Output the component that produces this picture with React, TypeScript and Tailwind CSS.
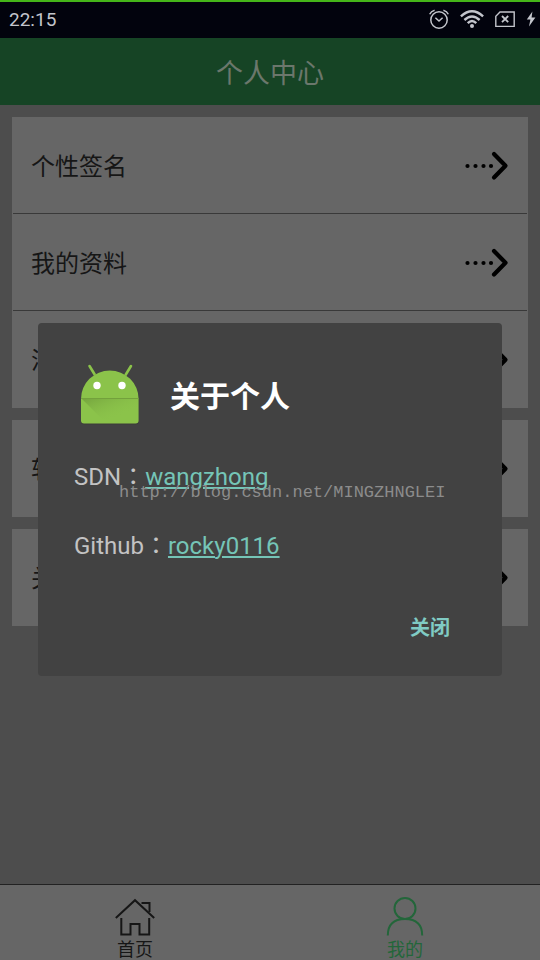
import React from "react";

const FONT = "font-[Roboto,'Noto_Sans_CJK_SC',sans-serif]";

function DottedArrow() {
  return (
    <svg className="h-8 w-11" viewBox="0 0 44 32" aria-hidden="true">
      <g fill="#000">
        <circle cx="2.5" cy="16" r="2.1" />
        <circle cx="10.5" cy="16" r="2.1" />
        <circle cx="18.5" cy="16" r="2.1" />
        <circle cx="26" cy="16" r="2.1" />
      </g>
      <path d="M29 4 L40.5 15.8 L29 27.5" fill="none" stroke="#000" strokeWidth="4.2" strokeLinecap="round" strokeLinejoin="round" />
    </svg>
  );
}

function StatusBar() {
  return (
    <header className="flex h-[38px] items-center justify-between border-t-2 border-[#45b619] bg-[#02030d] pb-[2px] pl-[9px] text-[#c3c5cc]">
      <time className="pt-[2px] text-[19px]">22:15</time>
      <div className="flex items-center gap-[11px]">
        <svg className="h-5 w-5" viewBox="0 0 20 20" fill="none" stroke="currentColor" strokeWidth="1.5" aria-label="Alarm">
          <circle cx="10" cy="11" r="8.2" />
          <path d="M6.4 8.8 L10 12 L13.6 8.8" />
          <path d="M0.7 5.2 Q2 2.2 5.6 1.2 M19.3 5.2 Q18 2.2 14.4 1.2" />
        </svg>
        <svg className="h-5 w-6" viewBox="0 0 24 20" fill="none" stroke="currentColor" strokeWidth="2.4" aria-label="Wi-Fi">
          <path d="M0.9 7.4 Q12 -2.8 23.1 7.4" />
          <path d="M4.4 11 Q12 4 19.6 11" />
          <path d="M7.7 14.2 Q12 10 16.3 14.2" />
          <circle cx="12" cy="17" r="2" fill="currentColor" stroke="none" />
        </svg>
        <svg className="h-5 w-5" viewBox="0 0 20 20" fill="none" stroke="currentColor" strokeWidth="1.4" aria-label="No SIM">
          <path d="M5 3 H19.2 V17.4 H0.8 V7.2 Z" />
          <path d="M7 7 L13.2 13.2 M13.2 7 L7 13.2" strokeWidth="1.8" />
        </svg>
        <svg className="mr-1 h-5 w-[10px]" viewBox="0 0 10 20" fill="currentColor" aria-label="Charging">
          <path d="M6.4 2.5 L0.8 10.6 H4.4 L3 17.5 L9.4 8.6 H5.6 Z" />
        </svg>
      </div>
    </header>
  );
}

function MenuRow({ label }: { label: string }) {
  return (
    <li className="h-[97px]">
      <button type="button" className="flex h-full w-full items-center justify-between px-[18px] pt-px text-2xl text-[#161616]">
        <span className="pt-[2px]">{label}</span>
        <DottedArrow />
      </button>
    </li>
  );
}

function MenuCard({ labels }: { labels: string[] }) {
  return (
    <ul className="divide-y divide-[#393939] bg-[#666666] px-px">
      {labels.map((label) => (
        <MenuRow key={label} label={label} />
      ))}
    </ul>
  );
}

function AndroidLogo() {
  return (
    <svg className="h-16 w-[60px]" viewBox="0 0 60 64" aria-hidden="true">
      <path d="M9.5 3 L15 12 M51 3 L45.5 12" stroke="#8bc34a" strokeWidth="2.6" strokeLinecap="round" />
      <path d="M1 37 A28.8 29.5 0 0 1 58.6 37 V58.5 Q58.6 61.5 55.6 61.5 H4 Q1 61.5 1 58.5 Z" fill="#35383080" />
      <path d="M1 36 A28.8 28.5 0 0 1 58.6 36 V57.5 Q58.6 60.5 55.6 60.5 H4 Q1 60.5 1 57.5 Z" fill="#8bc34a" />
      <defs>
        <linearGradient id="logo-shadow" x1="0" y1="0" x2="1" y2="1">
          <stop offset="0" stopColor="#6f9c3b" stopOpacity="0.8" />
          <stop offset="0.7" stopColor="#8bc34a" stopOpacity="0" />
        </linearGradient>
      </defs>
      <path d="M2 36 H58 V60 H26 Z" fill="url(#logo-shadow)" />
      <path d="M1 35.5 H58.6" stroke="#73a13c" strokeWidth="1.2" />
      <circle cx="17" cy="22.5" r="3.7" fill="#fff" />
      <circle cx="42" cy="22.5" r="3.7" fill="#fff" />
    </svg>
  );
}

function ContactLine({ site, account }: { site: string; account: string }) {
  return (
    <p className="h-10">
      {site}
      <span className="font-['Noto_Sans_CJK_TC',sans-serif] leading-none">：</span>
      <a href={"#" + account} className="text-[#75c5b7] underline decoration-2 underline-offset-2">
        {account}
      </a>
    </p>
  );
}

function AboutDialog() {
  return (
    <div className="absolute inset-0 flex items-center px-[38px] pt-[38px]">
      <section role="dialog" aria-modal="true" aria-labelledby="about-title" className="w-full rounded bg-[#424242] px-9 pt-10 pb-7">
        <div className="flex items-center gap-[30px] pl-[6px]">
          <AndroidLogo />
          <h2 id="about-title" className="pt-1 text-3xl font-bold text-white">关于个人</h2>
        </div>
        <div className="mt-[30px] flex flex-col gap-[29px] text-2xl leading-10 text-[#c3c3c3]">
          <div className="relative">
            <ContactLine site="SDN" account="wangzhong" />
            <span className="pointer-events-none absolute top-[26px] left-[45px] font-['Liberation_Mono',monospace] text-[17px] leading-5 whitespace-nowrap text-[#8c8c8c]">
              http://blog.csdn.net/MINGZHNGLEI
            </span>
          </div>
          <ContactLine site="Github" account="rocky0116" />
        </div>
        <div className="mt-[42px] flex justify-end pr-2">
          <button type="button" className="h-10 px-2 text-xl font-bold text-[#80cbc4]">关闭</button>
        </div>
      </section>
    </div>
  );
}

function TabBar() {
  return (
    <nav className="grid h-[76px] grid-cols-2 border-t border-[#222222] bg-[#666666] text-lg leading-5">
      <a href="#home" className="flex flex-col items-center justify-end gap-[3px] text-[#161616]">
        <svg className="h-10 w-10" viewBox="0 0 40 40" fill="none" stroke="currentColor" strokeWidth="2" aria-hidden="true">
          <path d="M0.8 21 L20 3.2 L39.2 21" />
          <path d="M26.5 6 H34.5 V15" />
          <path d="M6.3 21 V37.5 H15.5 V27 H24.5 V37.5 H34.2 V21" />
        </svg>
        首页
      </a>
      <a href="#me" className="flex flex-col items-center justify-end gap-[3px] text-[#23663a]">
        <svg className="h-10 w-10" viewBox="0 0 40 40" fill="none" stroke="currentColor" strokeWidth="2" aria-hidden="true">
          <circle cx="20" cy="11.5" r="10.5" />
          <path d="M2.8 38.5 C2.8 27 9 22 20 22 S37.2 27 37.2 38.5" />
        </svg>
        我的
      </a>
    </nav>
  );
}

export default function App() {
  return (
    <div className={"relative flex min-h-screen flex-col bg-[#4d4d4d] " + FONT}>
      <StatusBar />
      <h1 className="flex h-[67px] items-center justify-center bg-[#164425] pt-[6px] text-[27px] text-[#6b776c]">个人中心</h1>
      <main className="flex flex-1 flex-col gap-3 p-3">
        <MenuCard labels={["个性签名", "我的资料", "消息中心"]} />
        <MenuCard labels={["软件设置"]} />
        <MenuCard labels={["关于个人"]} />
      </main>
      <TabBar />
      <AboutDialog />
    </div>
  );
}
